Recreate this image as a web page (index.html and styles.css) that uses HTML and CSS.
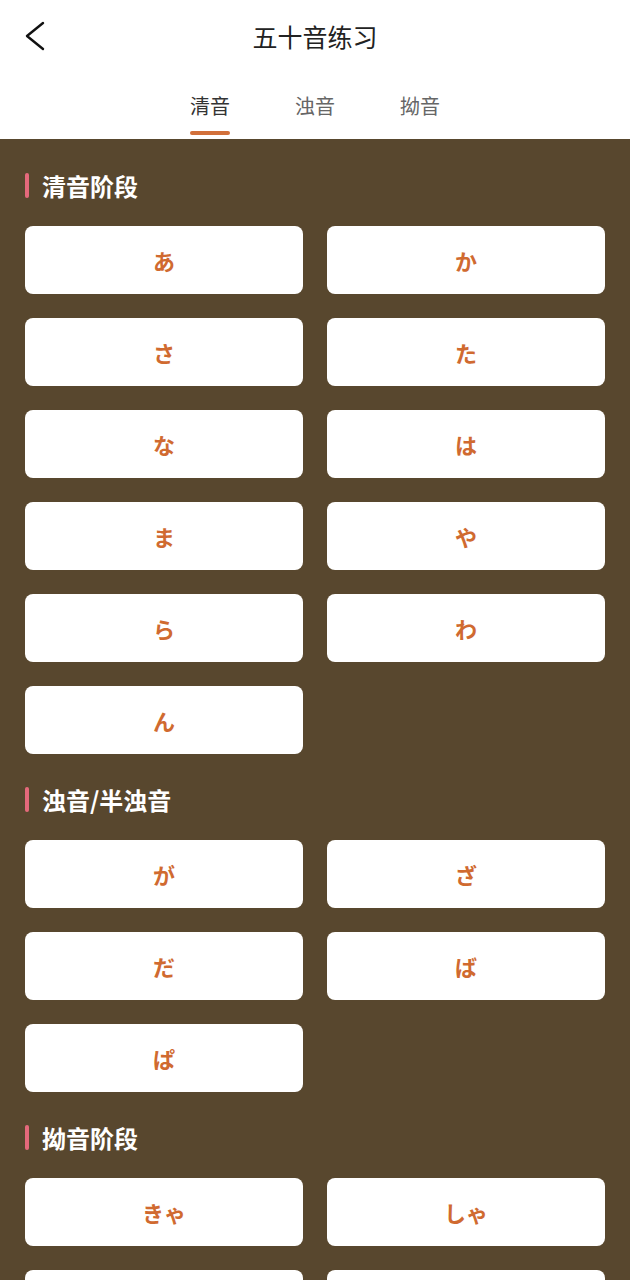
FILE: index.html
```html
<!DOCTYPE html>
<html lang="zh">
<head>
<meta charset="utf-8">
<link rel="stylesheet" href="styles.css">
</head>
<body>
<div class="page">
  <header class="nav">
    <div class="back">
      <svg width="24" height="34" viewBox="0 0 24 34"><path d="M20 3 L4 16 L20 29" fill="none" stroke="#111" stroke-width="2.4" stroke-linecap="round" stroke-linejoin="round"/></svg>
    </div>
    <h1 class="title">五十音练习</h1>
  </header>
  <nav class="tabs">
    <div class="tab active">清音<span class="bar"></span></div>
    <div class="tab">浊音</div>
    <div class="tab">拗音</div>
  </nav>
  <main class="content">
    <section class="section">
      <h2 class="sec-title">清音阶段</h2>
      <div class="grid">
        <div class="card">あ</div><div class="card">か</div>
        <div class="card">さ</div><div class="card">た</div>
        <div class="card">な</div><div class="card">は</div>
        <div class="card">ま</div><div class="card">や</div>
        <div class="card">ら</div><div class="card">わ</div>
        <div class="card">ん</div>
      </div>
    </section>
    <section class="section">
      <h2 class="sec-title">浊音/半浊音</h2>
      <div class="grid">
        <div class="card">が</div><div class="card">ざ</div>
        <div class="card">だ</div><div class="card">ば</div>
        <div class="card">ぱ</div>
      </div>
    </section>
    <section class="section">
      <h2 class="sec-title">拗音阶段</h2>
      <div class="grid">
        <div class="card">きゃ</div><div class="card">しゃ</div>
        <div class="card">ちゃ</div><div class="card">にゃ</div>
      </div>
    </section>
  </main>
</div>
</body>
</html>
```
FILE: styles.css
```css
* { box-sizing: border-box; margin: 0; padding: 0; }
html, body { width: 630px; height: 1280px; overflow: hidden; }
body {
  font-family: "Noto Sans CJK SC", "Noto Sans CJK JP", sans-serif;
  background: #58472e;
}
.page { width: 630px; }
.nav {
  position: relative;
  height: 72px;
  background: #fff;
  display: flex;
  align-items: center;
  justify-content: center;
}
.back {
  position: absolute;
  left: 23px;
  top: 20px;
  width: 24px;
  height: 34px;
}
.title {
  font-size: 25px;
  font-weight: 400;
  color: #222;
  line-height: 1;
}
.tabs {
  height: 67px;
  background: #fff;
  display: flex;
  justify-content: center;
  gap: 65px;
  padding-top: 21px;
}
.tab {
  position: relative;
  font-size: 20px;
  color: #666;
  line-height: 26px;
  width: 40px;
  text-align: center;
}
.tab.active { color: #333; }
.tab .bar {
  position: absolute;
  left: 0;
  top: 38px;
  width: 40px;
  height: 4px;
  border-radius: 2px;
  background: #d2703a;
}
.content {
  padding: 31px 25px 0;
  display: flex;
  flex-direction: column;
  gap: 30px;
}
.sec-title {
  height: 30px;
  display: flex;
  align-items: center;
  font-size: 24px;
  font-weight: 700;
  color: #fff;
  margin-bottom: 26px;
}
.sec-title::before {
  content: "";
  width: 4px;
  height: 25px;
  border-radius: 2px;
  background: #e5697b;
  margin-right: 13px;
}
.grid {
  display: grid;
  grid-template-columns: 1fr 1fr;
  column-gap: 24px;
  row-gap: 24px;
}
.card {
  height: 68px;
  background: #fff;
  border-radius: 8px;
  display: flex;
  align-items: center;
  justify-content: center;
  font-size: 22px;
  font-weight: 700;
  color: #d06a30;
}
```
